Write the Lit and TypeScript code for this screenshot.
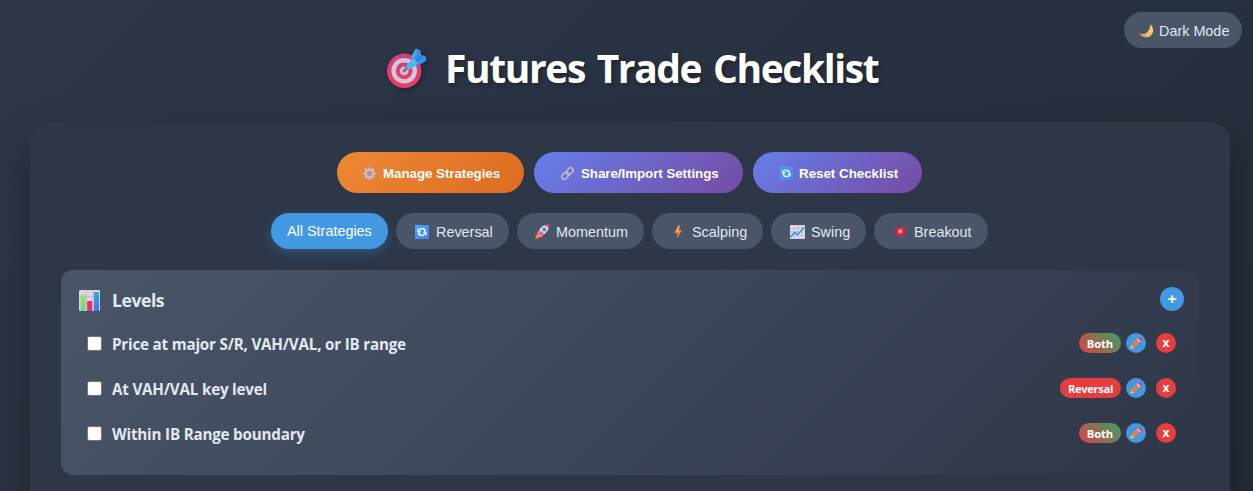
import { LitElement, html, css, svg, nothing } from "lit";
import { customElement, property, state } from "lit/decorators.js";
import { classMap } from "lit/directives/class-map.js";

type Kind = "both" | "reversal";

const glyphs: Record<string, unknown> = {
  target: svg`
    <defs><linearGradient id="tg" x1="0" y1="0" x2="0" y2="1"><stop offset="0" stop-color="#c9447c"/><stop offset="1" stop-color="#f03a5f"/></linearGradient></defs>
    <circle cx="17.2" cy="22.800" r="17.2" fill="url(#tg)"/><circle cx="17.2" cy="22.800" r="12.8" fill="#d3c5de"/>
    <circle cx="17.2" cy="22.800" r="8.4" fill="url(#tg)"/><circle cx="17.2" cy="22.800" r="4.4" fill="#cdbfd9"/>
    <path d="M17 23 22 18" stroke="#7b6a92" stroke-width="2.600" stroke-linecap="round"/>
    <path d="M24 8.500 29 .2 31.500 6.500 25.500 13z" fill="#4aa5ee"/>
    <path d="M25 12.500 30.500 5.500 29 .2 33.400 2.300 34.200 7 38.600 8.200 39.800 12.300 33.500 16.500 29 17z" fill="#348fe9"/>
    <path d="M35 7.400 28 14.400" stroke="#2a75d6" stroke-width="1.400"/>
    <path d="M20.300 16.200 26.200 10 31 15 24.800 20.600Q22 22.200 20 20.400 18.800 18.600 20.300 16.200z" fill="#4cb8ef"/>`,
  moon: svg`<defs><linearGradient id="mg" x1="1" y1="0" x2="0" y2="1"><stop offset="0" stop-color="#ffd766"/><stop offset=".6" stop-color="#fbb95a"/><stop offset="1" stop-color="#e88445"/></linearGradient></defs>
    <path d="M11.2.3C15 3.6 15.2 9 11.5 12 8 14.6 2.7 13.6.3 9.6c4.500 1 7 .1 8.700-2.400C10.600 5.200 11.500 2.800 11.200.3z" fill="url(#mg)"/>`,
  gear: svg`<g stroke="#bdb5d2" stroke-width="2.500"><path d="M6.500.2V2.800M6.500 10.200v2.600M.2 6.500h2.600M10.200 6.500h2.600M2 2l1.900 1.900M9.100 9.100l1.900 1.900M2 11l1.900-1.900M9.100 3.900l1.900-1.900"/></g>
    <circle cx="6.500" cy="6.500" r="3.300" fill="none" stroke="#c9c1da" stroke-width="3"/><circle cx="6.500" cy="6.500" r="2.500" fill="none" stroke="#8f88ad" stroke-width=".8"/>`,
  link: svg`<g fill="none" stroke="#c3b8c8" stroke-width="1.600"><rect x="-3.900" y="-2.500" width="7.800" height="5" rx="2.500" transform="translate(4.300 8.700) rotate(-45)"/><rect x="-3.900" y="-2.500" width="7.800" height="5" rx="2.500" transform="translate(8.700 4.300) rotate(-45)"/></g>`,
  cycle: svg`<defs><linearGradient id="cg" x1="0" y1="0" x2="1" y2="1"><stop offset="0" stop-color="#49a9f3"/><stop offset="1" stop-color="#3f85ea"/></linearGradient></defs>
    <rect width="14" height="14" rx=".6" fill="url(#cg)"/>
    <path d="M4.800 3.800H7.800Q10.100 3.800 10.200 6.400V7.600M9.200 10.200H6.200Q3.900 10.200 3.800 7.600V6.400" fill="none" stroke="#eef4ff" stroke-width="1.600"/>
    <path d="M12 7.300H7.600L11 10.900zM2 6.700H6.400L3 3.100z" fill="#eef4ff"/>`,
  rocket: svg`<path d="M3.600 7 .8 8.400 2.800 9.800zM8 11.300 6.700 14.400 5 12.300z" fill="#f0356c"/><path d="M.2 14.600.8 11.300 3 10.200 5 12.400 3.400 14.400z" fill="#f58a35"/>
    <path d="M2.400 9.800Q4.300 3.300 9.500 1.200L13.800.6 13.700 4.600Q11.600 10 5.200 12.700z" fill="#dcd3e8"/><path d="M10.300 1 14.500.2 13.900 4.600z" fill="#f2405c"/>
    <path d="M4 10.900 7 7.800" stroke="#ed3673" stroke-width="1.800"/><circle cx="9.300" cy="5.500" r="1.900" fill="#3490e8"/><path d="M2.200 7.300 5.400 6 3.600 9.300zM7.600 11.800 9.100 8.700 5.900 10.700z" fill="#ee3a72"/>`,
  bolt: svg`<defs><linearGradient id="bg" x1="0" y1="0" x2="0" y2="1"><stop offset="0" stop-color="#ffbd45"/><stop offset="1" stop-color="#f2554c"/></linearGradient></defs><path d="M4.600 0 5.600.4 5.200 5.300H8L2.800 14 3.400 8H.2z" fill="url(#bg)"/>`,
  rise: svg`<rect width="15" height="14" rx=".7" fill="#ded7e8"/><path d="M4 0v14M8 0v14M12 0v14M0 3.500h15M0 7h15M0 10.500h15" stroke="#c2b7d0" stroke-width=".7"/><path d="M.5 12.200 4.600 7.500 7.400 9.700 14.300 2.200" fill="none" stroke="#2d94df" stroke-width="1.500"/>`,
  burst: svg`<path d="M5.200 3.800 8.200 0 8.600 3.600 12.800 2.400 10.200 5.800 12.800 8 9.200 8.300 9.300 12 7 9.800 5.600 13.800 4.300 9.600 1 11.300 2.500 7.600 0 5.800 3 4.800 1.200 1.400z" fill="#ed1854"/><circle cx="6.300" cy="6.300" r="2.200" fill="#f98d2b"/><circle cx="6.300" cy="6.200" r="1.300" fill="#ffc83d"/>`,
  bars: svg`<defs><linearGradient id="b1" x1="0" y1="0" x2="0" y2="1"><stop offset="0" stop-color="#a9dc5f"/><stop offset="1" stop-color="#5ee085"/></linearGradient><linearGradient id="b2" x1="0" y1="0" x2="0" y2="1"><stop offset="0" stop-color="#34a9ee"/><stop offset="1" stop-color="#3478dc"/></linearGradient></defs>
    <rect width="21" height="21" rx="1.200" fill="#dcd5e4"/><path d="M7.500 0v21M14 0v21M0 6.500h21M0 14h21" stroke="#bbb1c8" stroke-width=".8"/>
    <rect x="1.600" y="4.800" width="5" height="16.200" rx=".6" fill="url(#b1)"/><rect x="8.200" y="11" width="5" height="10" rx=".6" fill="#e52e6d"/><rect x="15" y="2" width="5" height="19" rx=".6" fill="url(#b2)"/>`,
  pencil: svg`<path d="M.2 11.800 1.300 7.700 4.300 10.700z" fill="#f6c3a0"/><path d="M1.100 8.100 7.100 2.100 9.900 4.900 3.900 10.900z" fill="#f5813f"/><path d="M2.700 9.700 8.700 3.700" stroke="#e9603b" stroke-width="1"/><path d="M6.800 2.400 8.100 1.100 10.900 3.900 9.600 5.200z" fill="#ded4e8"/><path d="M7.800 1.400 8.800.4Q9.700-.4 10.500.4L11.600 1.500Q12.400 2.300 11.600 3.200L10.600 4.200z" fill="#f0405e"/>`,
};

const sizes: Record<string, [number, number]> = {
  target: [40, 41], moon: [14, 14], gear: [13, 13], link: [13, 13], cycle: [14, 14], rocket: [15, 15],
  bolt: [8, 14], rise: [15, 14], burst: [13, 14], bars: [21, 21], pencil: [12, 12],
};

@customElement("ui-glyph")
export class UiGlyph extends LitElement {
  @property() name = "gear";
  @property({ type: Number }) scale = 1;
  static styles = css`
    :host { display: block; flex: none; }
    svg { display: block; overflow: visible; }
  `;
  render() {
    const [w, h] = sizes[this.name];
    return html`<svg width=${w * this.scale} height=${h * this.scale} viewBox="0 0 ${w} ${h}" aria-hidden="true">${glyphs[this.name]}</svg>`;
  }
}

@customElement("check-item")
export class CheckItem extends LitElement {
  @property() label = "";
  @property() kind: Kind = "both";
  static styles = css`
    :host { display: flex; align-items: center; box-sizing: border-box; height: 45px; padding: 0 23px 0 26px; }
    .box { appearance: none; box-sizing: border-box; width: 15px; height: 15px; margin: 1px 0 0; border: 1px solid #767676; border-radius: 2.5px; background: #fff; }
    .label { flex: 1; margin: 3px 0 0 10px; color: #e2e8f0; font: 700 15.200px/20px "Open Sans", "Noto Sans", sans-serif; letter-spacing: -.2px; white-space: nowrap; }
    .badge { box-sizing: border-box; height: 20px; border-radius: 12px; padding: 1px 0 0; text-align: center; color: #fff; font: 700 11.200px/20px "Open Sans", sans-serif; letter-spacing: -.1px; }
    .both { width: 42px; background: linear-gradient(45deg, #e53e3e, #38a169); }
    .reversal { width: 61px; background: #e53e3e; letter-spacing: -.35px; }
    .round { display: flex; align-items: center; justify-content: center; box-sizing: border-box; width: 20px; height: 20px; padding: 0; border: 0; border-radius: 50%; color: #fff; }
    .edit { margin-left: 5px; background: #4299e1; }
    .remove { margin-left: 10px; background: #e53e3e; font: 700 12px/20px "Open Sans", sans-serif; }
  `;
  render() {
    return html`
      <input class="box" type="checkbox" aria-label=${this.label} />
      <span class="label">${this.label}</span>
      <span class="badge ${this.kind}">${this.kind === "both" ? "Both" : "Reversal"}</span>
      <button class="round edit" aria-label="Edit"><ui-glyph name="pencil"></ui-glyph></button>
      <button class="round remove">x</button>
    `;
  }
}

@customElement("app-root")
export class AppRoot extends LitElement {
  @state() private active = "All Strategies";

  private actions = [
    { id: "manage", icon: "gear", scale: 1, text: "Manage Strategies" },
    { id: "share", icon: "link", scale: 1, text: "Share/Import Settings" },
    { id: "reset", icon: "cycle", scale: 13 / 14, text: "Reset Checklist" },
  ];
  private filters = [
    { id: "all", icon: "", text: "All Strategies" },
    { id: "rev", icon: "cycle", text: "Reversal" },
    { id: "mom", icon: "rocket", text: "Momentum" },
    { id: "scalp", icon: "bolt", text: "Scalping" },
    { id: "swing", icon: "rise", text: "Swing" },
    { id: "break", icon: "burst", text: "Breakout" },
  ];
  private items: { label: string; kind: Kind }[] = [
    { label: "Price at major S/R, VAH/VAL, or IB range", kind: "both" },
    { label: "At VAH/VAL key level", kind: "reversal" },
    { label: "Within IB Range boundary", kind: "both" },
  ];

  static styles = css`
    :host { display: block; height: 491px; overflow: hidden; position: relative; background: linear-gradient(135deg, #2d3748 0%, #232c39 100%); }
    * { box-sizing: border-box; }
    button { border: 0; padding: 0; white-space: nowrap; }
    .theme { position: absolute; top: 12px; right: 11px; width: 118px; height: 36px; border-radius: 20px; background: #4a5568; color: #e2e8f0; display: flex; align-items: center; padding: 2px 0 0 15px; gap: 6px; font: 14.400px "Liberation Sans", Arial, sans-serif; }
    .heading { display: flex; height: 122px; padding: 48px 0 0 387px; }
    h1 { margin: -7px 0 0 18px; color: #fff; font: 700 39px/54px "Open Sans", "Noto Sans", sans-serif; letter-spacing: -1.400px; word-spacing: 3px; white-space: nowrap; text-shadow: 2px 2px 4px rgba(0, 0, 0, .3); }
    .logo { filter: drop-shadow(2px 2px 2px rgba(0, 0, 0, .25)); }
    .panel { width: 1200px; height: 700px; margin-left: 30px; padding: 30px 31px; border-radius: 20px; background: #2d3748; box-shadow: 0 20px 40px rgba(0, 0, 0, .3); }
    .actions { display: flex; justify-content: center; gap: 10px; padding-right: 1px; }
    .action { display: flex; align-items: center; height: 41px; border-radius: 25px; color: #fff; font: 700 13.333px "Liberation Sans", Arial, sans-serif; letter-spacing: -.04px; background: linear-gradient(135deg, #667eea, #764ba2); padding: 2px 0 0 26px; gap: 7px; }
    .action.manage { width: 187px; background: linear-gradient(135deg, #ed8936, #dd6b20); }
    .action.share { width: 209px; padding-left: 27px; }
    .action.reset { width: 169px; padding-left: 27px; gap: 6px; letter-spacing: 0; }
    .filters { display: flex; justify-content: center; gap: 8px; margin: 20px 1px 21px 0; }
    .filter { display: flex; align-items: center; height: 36px; border-radius: 20px; background: #4a5568; color: #e2e8f0; font: 14.400px "Liberation Sans", Arial, sans-serif; padding-top: 1px; }
    .on { background: #4299e1; color: #fff; box-shadow: 0 4px 12px rgba(66, 153, 225, .3); }
    .filter.all { width: 117px; padding: 0 0 1px 16px; }
    .rev { width: 113px; padding-left: 19px; gap: 7px; }
    .mom { width: 127px; padding-left: 18px; gap: 6px; }
    .scalp { width: 111px; padding-left: 22px; gap: 10px; }
    .swing { width: 95px; padding-left: 19px; gap: 6px; }
    .break { width: 114px; padding-left: 20px; gap: 7px; }
    .section { height: 205px; border-radius: 12px; background: linear-gradient(135deg, #4a5568, #2d3748); }
    .top { display: flex; align-items: center; height: 50px; padding: 8px 15px 0 18px; }
    .top ui-glyph { margin-top: 2px; }
    h2 { flex: 1; margin: 1px 0 0 12px; color: #e2e8f0; font: 700 17.600px/24px "Open Sans", "Noto Sans", sans-serif; letter-spacing: -.45px; }
    .add { width: 24px; height: 24px; border-radius: 50%; background: #4299e1; color: #fff; font: 700 16px/22px "Open Sans", sans-serif; padding-bottom: 1px; }
  `;

  render() {
    return html`
      <button class="theme"><ui-glyph name="moon"></ui-glyph><span>Dark Mode</span></button>
      <header class="heading"><ui-glyph class="logo" name="target"></ui-glyph><h1>Futures Trade Checklist</h1></header>
      <main class="panel">
        <div class="actions">
          ${this.actions.map((a) => html`<button class="action ${a.id}"><ui-glyph name=${a.icon} .scale=${a.scale}></ui-glyph><span>${a.text}</span></button>`)}
        </div>
        <nav class="filters">
          ${this.filters.map((f) => html`<button class=${classMap({ filter: true, [f.id]: true, on: f.text === this.active })} @click=${() => (this.active = f.text)}>
            ${f.icon ? html`<ui-glyph name=${f.icon}></ui-glyph>` : nothing}<span>${f.text}</span></button>`)}
        </nav>
        <section class="section">
          <div class="top"><ui-glyph name="bars"></ui-glyph><h2>Levels</h2><button class="add">+</button></div>
          ${this.items.map((i) => html`<check-item .label=${i.label} .kind=${i.kind}></check-item>`)}
        </section>
      </main>
    `;
  }
}
